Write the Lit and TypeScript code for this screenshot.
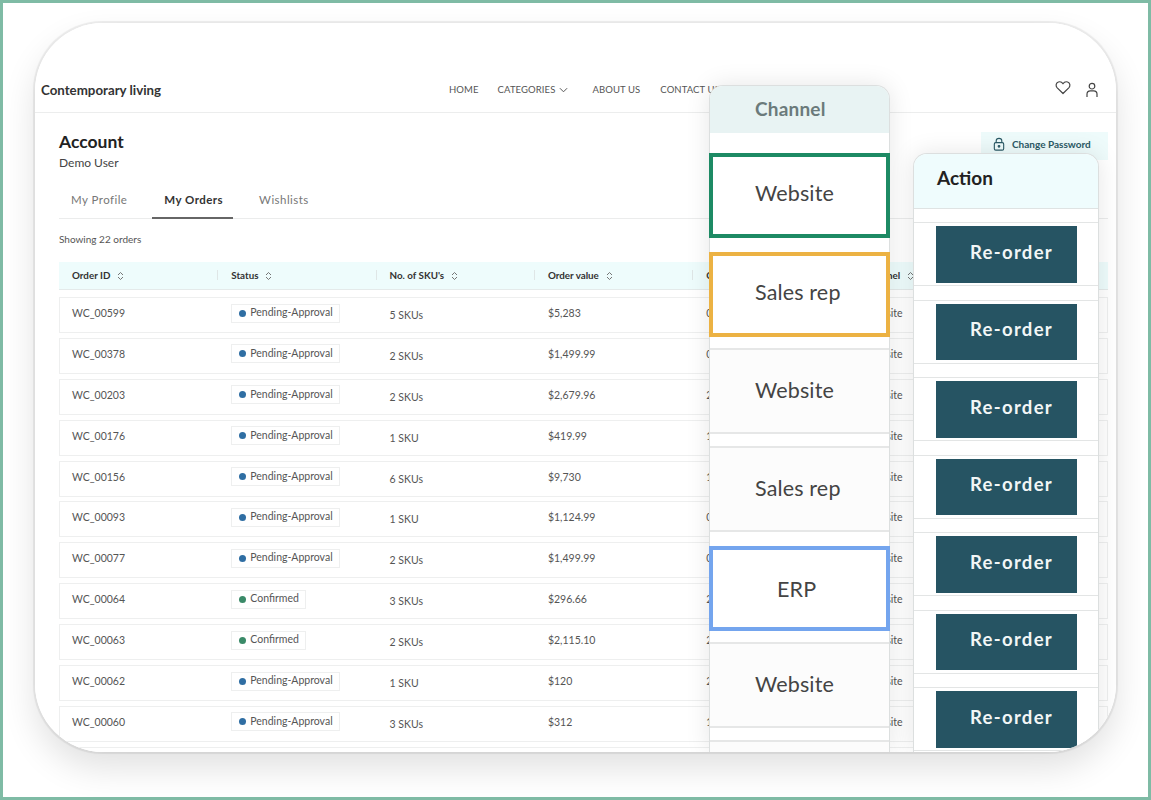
import { LitElement, html, css, svg } from 'lit';
import { customElement } from 'lit/decorators.js';

type Order = { id: string; status: string; skus: string; value: string; date: string };

const orders: Order[] = [
  { id: 'WC_00599', status: 'Pending-Approval', skus: '5 SKUs', value: '$5,283', date: '09/12/23' },
  { id: 'WC_00378', status: 'Pending-Approval', skus: '2 SKUs', value: '$1,499.99', date: '06/10/23' },
  { id: 'WC_00203', status: 'Pending-Approval', skus: '2 SKUs', value: '$2,679.96', date: '22/09/23' },
  { id: 'WC_00176', status: 'Pending-Approval', skus: '1 SKU', value: '$419.99', date: '14/09/23' },
  { id: 'WC_00156', status: 'Pending-Approval', skus: '6 SKUs', value: '$9,730', date: '11/09/23' },
  { id: 'WC_00093', status: 'Pending-Approval', skus: '1 SKU', value: '$1,124.99', date: '08/09/23' },
  { id: 'WC_00077', status: 'Pending-Approval', skus: '2 SKUs', value: '$1,499.99', date: '07/09/23' },
  { id: 'WC_00064', status: 'Confirmed', skus: '3 SKUs', value: '$296.66', date: '28/08/23' },
  { id: 'WC_00063', status: 'Confirmed', skus: '2 SKUs', value: '$2,115.10', date: '28/08/23' },
  { id: 'WC_00062', status: 'Pending-Approval', skus: '1 SKU', value: '$120', date: '21/08/23' },
  { id: 'WC_00060', status: 'Pending-Approval', skus: '3 SKUs', value: '$312', date: '17/08/23' },
];

const columns = ['Order ID', 'Status', "No. of SKU's", 'Order value', 'Order date', 'Channel'];

const sortIcon = html`<svg class="sort" viewBox="0 0 7 10" width="7" height="10" fill="none" stroke="#666" stroke-width="0.9">
  ${svg`<path d="M1 4 L3.5 1.5 L6 4"/><path d="M1 6 L3.5 8.5 L6 6"/>`}
</svg>`;

@customElement('app-root')
export class AppRoot extends LitElement {
  static override styles = css`
    :host {
      display: block;
      font-family: Lato, 'Open Sans', sans-serif;
    }
    .frame {
      box-sizing: border-box;
      width: 1151px;
      height: 800px;
      border: 3px solid #7fbba5;
      background: #fff;
      padding: 20px 0 0 32px;
      overflow: hidden;
    }
    .card {
      position: relative;
      box-sizing: border-box;
      width: 1081px;
      height: 729px;
      border-radius: 68px;
      background: #fff;
      overflow: hidden;
    }
    .shadow {
      width: 1081px;
      height: 729px;
      border-radius: 68px;
      box-shadow: 0 0 1px 1.5px rgba(0, 0, 0, 0.07), 0 16px 34px rgba(0, 0, 0, 0.12);
    }
    .top {
      display: grid;
      grid-template-columns: 408px 1fr auto;
      align-items: center;
      height: 90px;
      padding: 44px 17px 0 6px;
      box-sizing: border-box;
      border-bottom: 1px solid #eceded;
    }
    .logo {
      font-size: 13.3px;
      font-weight: 700;
      color: #333;
      white-space: nowrap;
    }
    .nav {
      display: flex;
      align-items: center;
      gap: 21px;
      font-size: 9.5px;
      color: #555;
      letter-spacing: 0.1px;
    }
    .nav span {
      display: flex;
      align-items: center;
      gap: 4px;
      white-space: nowrap;
    }
    .nav .cat {
      margin: 0 3px 0 -2px;
    }
    .nav .contact {
      margin-left: -1px;
    }
    .icons {
      display: flex;
      align-items: center;
      gap: 14px;
    }
    .heart {
      margin-top: -4px;
    }
    .person {
      margin-top: 1px;
    }
    .body {
      padding: 18px 8px 0 24px;
    }
    .account {
      display: flex;
      justify-content: space-between;
      align-items: flex-start;
    }
    h1 {
      margin: 0;
      font-size: 17.5px;
      line-height: 22px;
      font-weight: 700;
      color: #222;
    }
    .user {
      font-size: 12px;
      line-height: 16px;
      margin-top: 2px;
      color: #444;
    }
    .pass {
      display: flex;
      align-items: center;
      gap: 7px;
      height: 28px;
      width: 127px;
      box-sizing: border-box;
      padding: 0 0 5px 12px;
      margin-top: 1px;
      background: #eefbfb;
      color: #2b5a66;
      font-size: 10px;
      font-weight: 700;
      white-space: nowrap;
    }
    .tabs {
      display: flex;
      margin-top: 12px;
      border-bottom: 1px solid #ebecec;
      font-size: 11.5px;
      letter-spacing: 0.45px;
      color: #777;
    }
    .tab {
      padding: 0 12px;
      height: 35px;
      line-height: 34px;
      box-sizing: border-box;
    }
    .tab.first {
      margin-right: 13px;
    }
    .tab.on {
      color: #333;
      font-weight: 700;
      border-bottom: 2px solid #666;
      margin-bottom: -1px;
      height: 36px;
      padding-right: 10px;
      margin-right: 14px;
    }
    .count {
      margin-top: 14px;
      font-size: 10px;
      line-height: 12px;
      color: #555;
    }
    .grid {
      display: grid;
      grid-template-columns: repeat(6, 158.3px) 1fr;
      align-items: center;
    }
    .head {
      margin-top: 17px;
      height: 28px;
      padding-bottom: 2px;
      background: #eefcfc;
      border-bottom: 1px solid #e4eaea;
      box-sizing: border-box;
      font-size: 9.8px;
      font-weight: 700;
      color: #333;
    }
    .th {
      display: flex;
      align-items: center;
      gap: 7px;
      height: 10px;
      padding-left: 13px;
      border-left: 1px solid #dfe6e6;
      white-space: nowrap;
    }
    .th.first {
      border-left: 0;
    }
    .sort {
      flex: none;
      margin-top: 2px;
    }
    .rows {
      display: flex;
      flex-direction: column;
      gap: 4.9px;
      margin-top: 7px;
    }
    .row {
      height: 36px;
      box-sizing: border-box;
      border: 1px solid #eeefef;
      font-size: 10.5px;
      color: #555;
    }
    .td {
      padding: 0 0 4px 13px;
      white-space: nowrap;
    }
    .td.low {
      padding-bottom: 0;
    }
    .td.first {
      padding-left: 12px;
    }
    .badge {
      display: inline-flex;
      align-items: center;
      gap: 4px;
      height: 19px;
      padding: 0 6px 2px 7px;
      box-sizing: border-box;
      border: 1px solid #eeefef;
      vertical-align: middle;
    }
    .dot {
      width: 7px;
      height: 7px;
      border-radius: 50%;
      background: #2f6ea3;
      margin-top: 2px;
    }
    .dot.ok {
      background: #3a8a68;
    }
    .panel {
      position: absolute;
      bottom: 0;
      box-sizing: border-box;
      border: 1px solid #dcdfdf;
      border-bottom: 0;
      border-radius: 14px 14px 0 0;
      background: #fff;
      box-shadow: 0 0 24px rgba(0, 0, 0, 0.1);
    }
    .channel {
      left: 674px;
      top: 62px;
      width: 181px;
    }
    .action {
      left: 878px;
      top: 130px;
      width: 186px;
    }
    .panel header {
      box-sizing: border-box;
      border-radius: 13px 13px 0 0;
      font-weight: 700;
    }
    .channel header {
      height: 47px;
      padding: 11px 0 0 45px;
      background: #e8f3f3;
      font-size: 19px;
      letter-spacing: 0.2px;
      color: #6b7a7b;
    }
    .action header {
      height: 55px;
      padding: 12px 0 0 23px;
      background: #effcfd;
      border-bottom: 1px solid #dfe3e3;
      font-size: 19px;
      color: #222;
    }
    .cells {
      display: flex;
      flex-direction: column;
      gap: 12px;
      padding-top: 20px;
    }
    .cell {
      flex: none;
      display: flex;
      align-items: center;
      height: 86px;
      box-sizing: border-box;
      padding: 0 0 2px 45px;
      border-top: 2px solid #e6e7e7;
      border-bottom: 2px solid #e6e7e7;
      background: #fcfcfc;
      font-size: 21.5px;
      letter-spacing: 0.15px;
      color: #444;
    }
    .cell.mark {
      height: 85px;
      border: 4px solid;
      background: #fff;
      padding: 0 0 6px 42px;
      margin: 0 -1px;
    }
    .cell.green {
      border-color: #1d8a64;
      margin-bottom: 2px;
    }
    .cell.yellow {
      border-color: #ecb243;
      margin-bottom: -1px;
    }
    .cell.blue {
      border-color: #74a5ee;
      padding: 0 0 0 64px;
      margin-top: 2px;
      margin-bottom: -1px;
    }
    .buttons {
      display: flex;
      flex-direction: column;
      gap: 13.5px;
      padding-top: 13px;
    }
    .slot {
      flex: none;
      height: 64px;
      box-sizing: border-box;
      padding: 3px 0 0 22px;
      border-top: 1px solid #e3e5e5;
      border-bottom: 1px solid #e3e5e5;
    }
    .btn {
      display: flex;
      align-items: center;
      width: 141px;
      height: 56.5px;
      padding: 0 0 5px 34px;
      box-sizing: border-box;
      background: #265463;
      color: #f2f6f6;
      font-size: 18.5px;
      font-weight: 700;
      letter-spacing: 1.3px;
    }
  `;

  private renderRow(o: Order) {
    const pending = o.status !== 'Confirmed';
    return html`<div class="grid row">
      <div class="td first">${o.id}</div>
      <div class="td"><span class="badge"><i class="dot ${pending ? '' : 'ok'}"></i>${o.status}</span></div>
      <div class="td low">${o.skus}</div>
      <div class="td">${o.value}</div>
      <div class="td">${o.date}</div>
      <div class="td">Website</div>
      <div class="td"></div>
    </div>`;
  }

  override render() {
    const cells = [
      ['Website', 'mark green'],
      ['Sales rep', 'mark yellow'],
      ['Website', ''],
      ['Sales rep', ''],
      ['ERP', 'mark blue'],
      ['Website', ''],
      ['', ''],
    ];
    return html`<div class="frame">
      <div class="shadow">
        <div class="card">
          <div class="top">
            <div class="logo">Contemporary living</div>
            <div class="nav">
              <span>HOME</span>
              <span class="cat">CATEGORIES
                <svg viewBox="0 0 10 6" width="9" height="6" fill="none" stroke="#555" stroke-width="1.1"><path d="M1 1 L5 5 L9 1"/></svg>
              </span>
              <span>ABOUT US</span>
              <span class="contact">CONTACT US</span>
            </div>
            <div class="icons">
              <svg class="heart" viewBox="0 0 16 15" width="16" height="15" fill="none" stroke="#444" stroke-width="1.2" stroke-linejoin="round"><path d="M8 13.5 L2 7.6 C0.4 5.8 1 2.8 3.4 2 C5.2 1.4 7 2.2 8 3.8 C9 2.2 10.8 1.4 12.6 2 C15 2.8 15.6 5.8 14 7.6 Z"/></svg>
              <svg class="person" viewBox="0 0 14 16" width="14" height="16" fill="none" stroke="#444" stroke-width="1.2"><circle cx="7" cy="4.2" r="2.8"/><path d="M2 15 V12 C2 10 3.6 8.8 5.4 8.8 H8.6 C10.4 8.8 12 10 12 12 V15"/></svg>
            </div>
          </div>
          <div class="body">
            <div class="account">
              <div>
                <h1>Account</h1>
                <div class="user">Demo User</div>
              </div>
              <div class="pass">
                <svg viewBox="0 0 12 15" width="12" height="14" fill="none" stroke="#2b5a66" stroke-width="1.2"><rect x="1" y="6" width="10" height="8" rx="1.5"/><path d="M3 6 V4 C3 0.6 9 0.6 9 4 V6"/><circle cx="6" cy="10" r="0.9" fill="#2b5a66"/></svg>
                Change Password
              </div>
            </div>
            <div class="tabs">
              <div class="tab first">My Profile</div>
              <div class="tab on">My Orders</div>
              <div class="tab">Wishlists</div>
            </div>
            <div class="count">Showing 22 orders</div>
            <div class="grid head">
              ${columns.map((c, i) => html`<div class="th ${i === 0 ? 'first' : ''}">${c} ${sortIcon}</div>`)}
              <div class="th">Action</div>
            </div>
            <div class="rows">
              ${orders.map((o) => this.renderRow(o))}
              <div class="row"></div>
            </div>
          </div>
          <div class="panel channel">
            <header>Channel</header>
            <div class="cells">
              ${cells.map(([t, c]) => html`<div class="cell ${c}">${t}</div>`)}
            </div>
          </div>
          <div class="panel action">
            <header>Action</header>
            <div class="buttons">
              ${[0, 1, 2, 3, 4, 5, 6].map(() => html`<div class="slot"><div class="btn">Re-order</div></div>`)}
            </div>
          </div>
        </div>
      </div>
    </div>`;
  }
}
